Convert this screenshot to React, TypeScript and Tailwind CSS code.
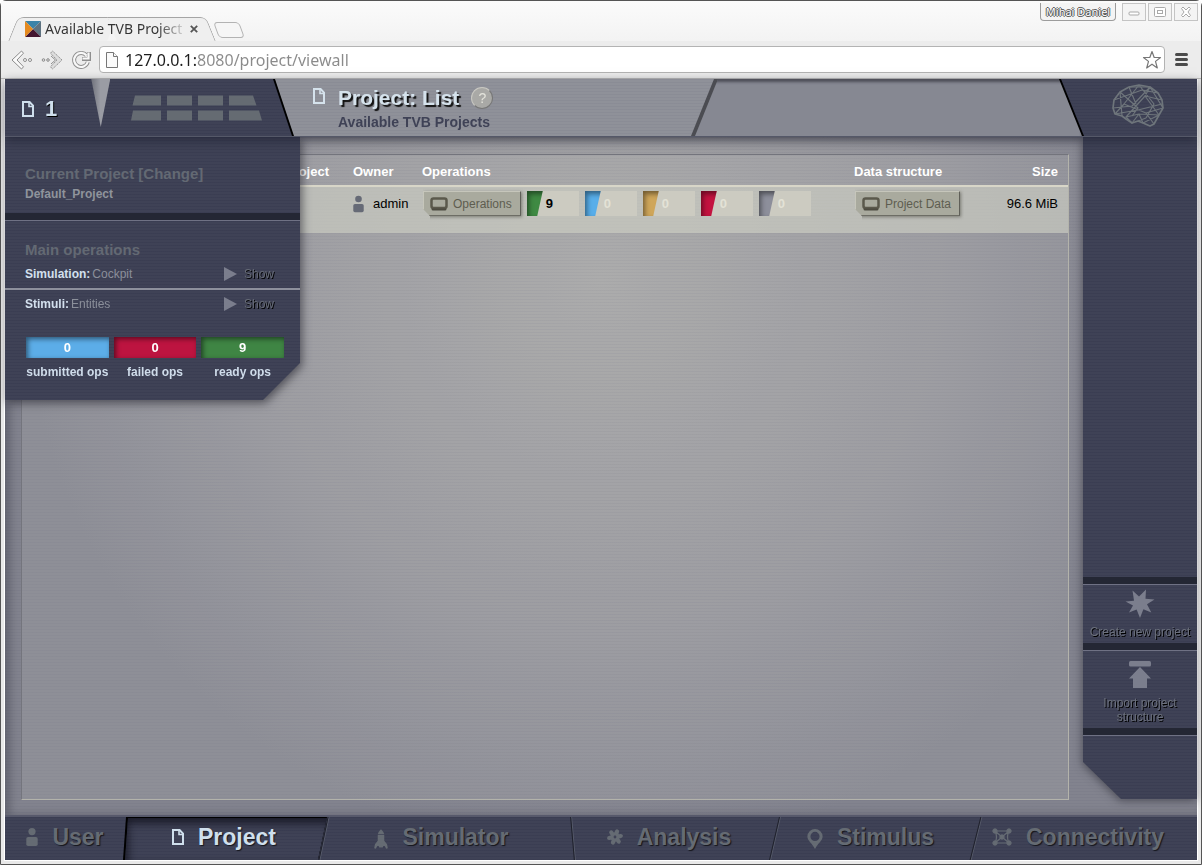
import type { ReactNode } from "react";

const NAVY =
  "bg-[#3f4256] bg-[image:repeating-linear-gradient(to_bottom,rgba(20,22,50,0.10)_0px,rgba(20,22,50,0.10)_1px,transparent_1px,transparent_3px)]";

type IconProps = { className?: string };

function PageIcon({ className }: IconProps) {
  return (
    <svg viewBox="0 0 12 16" className={className} fill="none" stroke="currentColor" strokeWidth="2">
      <path d="M1 1h6.600L11 4.600V15H1z" />
      <path d="M7 1v4.500h4" strokeWidth="1.600" />
    </svg>
  );
}

function PersonIcon({ className }: IconProps) {
  return (
    <svg viewBox="0 0 12 18" className={className} fill="currentColor">
      <circle cx="6" cy="3.600" r="3.600" />
      <rect x="0.300" y="9" width="11.400" height="9" rx="1.800" />
    </svg>
  );
}

function RocketIcon({ className }: IconProps) {
  return (
    <svg viewBox="0 0 15 21" className={className} fill="currentColor">
      <path d="M7.500 0C9.400 1.600 10.600 3.600 10.900 5.400H4.100C4.400 3.600 5.600 1.600 7.500 0z" />
      <path d="M4 6.200h7v6.300l3 3.500.8 4.500-1.800.5-1.500-3H10l-.6 1.600H5.600L5 18H3.500l-1.500 3-1.800-.5L1 16l3-3.500z" />
    </svg>
  );
}

function FlowerIcon({ className }: IconProps) {
  const angles = [20, 80, 140, 200, 260, 320];
  return (
    <svg viewBox="0 0 16 16" className={className} fill="currentColor">
      <path
        fillRule="evenodd"
        d="M8 3.200a4.800 4.800 0 1 0 0 9.600 4.800 4.800 0 0 0 0-9.600zm0 3.400a1.400 1.400 0 1 1 0 2.800 1.400 1.400 0 0 1 0-2.800z"
      />
      {angles.map((a) => (
        <ellipse key={a} cx="8" cy="2.600" rx="2.100" ry="2.600" transform={`rotate(${a} 8 8)`} />
      ))}
    </svg>
  );
}

function PinIcon({ className }: IconProps) {
  return (
    <svg viewBox="0 0 16 21" className={className} fill="currentColor">
      <path
        fillRule="evenodd"
        d="M8 0a8 8 0 0 1 8 8c0 4.500-5 7-8 13C5 15 0 12.500 0 8a8 8 0 0 1 8-8zm0 3a4.800 4.800 0 1 0 0 9.600A4.800 4.800 0 0 0 8 3z"
      />
    </svg>
  );
}

function NetworkIcon({ className }: IconProps) {
  return (
    <svg viewBox="0 0 20 18" className={className} fill="currentColor" stroke="currentColor">
      <path d="M3 3h14c-2 4-2 8 0 12H3c2-4 2-8 0-12zM3 3l14 12M17 3 3 15" fill="none" strokeWidth="1.200" />
      <circle cx="3" cy="3" r="2.200" />
      <circle cx="17" cy="3" r="2.200" />
      <circle cx="3" cy="15" r="2.200" />
      <circle cx="17" cy="15" r="2.200" />
      <circle cx="10" cy="9" r="2.200" />
    </svg>
  );
}

function MonitorIcon() {
  return (
    <svg viewBox="0 0 18 14" className="h-3.5 w-[18px]">
      <rect x="1.500" y="1.500" width="15" height="9.500" rx="2" fill="none" stroke="#5b594c" strokeWidth="2.500" />
      <path d="M1.500 11.500h15v.5a1.500 1.500 0 0 1-1.500 1.500H3A1.500 1.500 0 0 1 1.500 12z" fill="#4d4b40" />
    </svg>
  );
}

function BrainIcon() {
  return (
    <svg viewBox="0 0 52 43" className="h-[43px] w-[52px]" fill="none" stroke="#6e757b" strokeLinejoin="round">
      <path
        strokeWidth="1.700"
        d="M1 24 2 16 8 8 17 3 27 1 38 3 46 9 50 16 51 24 47 31 42 40 38 42 31 39 26 37 20 39 14 35 10 32 3 30z"
      />
      <path
        strokeWidth="1.200"
        d="M8 8 26 24 20 32M8 8 10 32M17 3 38 3 33 12 50 16M2 16 30 6 46 9M27 1 12 20 3 30M12 20 34 29 51 24M38 3 20 22 1 24M38 3 51 24M33 12 47 31M33 12 14 33 27 30 47 31M27 1 42 20 34 34M17 3 24 20M3 30 26 26 50 20M34 29 42 40M34 34 26 37M14 33 20 39 27 30 31 39 47 31"
      />
    </svg>
  );
}

function LayoutGlyph() {
  return (
    <svg viewBox="0 0 131 26" className="h-[26px] w-[131px]" fill="#656b72">
      <path d="M4 0.500h26v10H1.500zM36 .5h25v10H36zM67 .5h25v10H67zM98 .5h24l3.500 10H98z" />
      <path d="M2 15.500h28v10H0zM36 15.500h25v10H36zM67 15.500h25v10H67zM98 15.500h30l3 10H98z" />
    </svg>
  );
}

function WindowButton({ label, children }: { label: string; children: ReactNode }) {
  return (
    <button aria-label={label} className="flex h-[18px] w-6 items-center justify-center border border-[#c4c4c4] bg-[#f4f4f4]">
      <svg viewBox="0 0 14 12" className="h-3 w-3.5" fill="#fff" stroke="#a9a9a9" strokeWidth="1">
        {children}
      </svg>
    </button>
  );
}

function BrowserChrome() {
  return (
    <div className="bg-gradient-to-b from-[#fbfbfb] to-[#ebebeb] font-['Noto_Sans',sans-serif]">
      <div className="flex h-10 items-start justify-between pr-[3px]">
        <div className="flex h-full items-end pl-3">
          <div className="relative flex h-6 w-[197px] items-center gap-1 pr-3 pl-2">
            <span className="absolute inset-y-0 left-0 w-1/2 -skew-x-[22deg] rounded-tl-md border-t border-l border-[#a5a5a5] bg-[#efefef]" />
            <span className="absolute inset-y-0 right-0 w-1/2 skew-x-[22deg] rounded-tr-md border-t border-r border-[#a5a5a5] bg-[#efefef]" />
            <svg viewBox="0 0 16 16" className="relative ml-1 h-4 w-4 shrink-0">
              <path d="M0 0h16L8 8z" fill="#3a83a8" />
              <path d="M16 0v16L8 8z" fill="#5d7280" />
              <path d="M0 16h16L8 8z" fill="#43152f" />
              <path d="M0 0v16l8-8z" fill="#e58a1f" />
            </svg>
            <span className="relative min-w-0 flex-1 overflow-hidden bg-[linear-gradient(90deg,#333_82%,#33333333)] bg-clip-text text-sm leading-5 whitespace-nowrap text-transparent">
              Available TVB Projects
            </span>
            <button aria-label="Close tab" className="relative flex h-4 w-3 items-center justify-end">
              <svg viewBox="0 0 8 8" className="h-2 w-2" stroke="#555" strokeWidth="1.800">
                <path d="m.8.8 6.400 6.400M7.200.8.8 7.200" />
              </svg>
            </button>
          </div>
          <button
            aria-label="New tab"
            className="mb-[3px] ml-1.5 h-4 w-[26px] skew-x-[20deg] rounded border border-[#b3b3b3] bg-[#f6f6f6]"
          />
        </div>
        <div className="flex gap-0.5 pt-0.5">
          <button className="mr-1 h-[18px] w-[76px] rounded-b border border-t-0 border-[#9c9c9c] bg-[#f4f4f4] text-[11px] leading-4 text-white [text-shadow:1px_0_#555,-1px_0_#555,0_1px_#555,0_-1px_#555]">
            Mihai Daniel
          </button>
          <WindowButton label="Minimize">
            <rect x="2" y="6" width="10" height="3" rx="1" />
          </WindowButton>
          <WindowButton label="Maximize">
            <rect x="1.500" y="1.500" width="11" height="9" rx="1" />
            <rect x="4.500" y="4.500" width="5" height="3" />
          </WindowButton>
          <WindowButton label="Close">
            <path d="M2.500 2.500 4 1l3 3 3-3 1.500 1.500L9 6l2.500 3.500L10 11 7 8l-3 3-1.500-1.500L5 6z" />
          </WindowButton>
        </div>
      </div>
      <div className="flex h-[38px] items-center gap-2 border-b border-[#bbb] bg-[#ececec] pr-1.5 pl-2.5">
        <button aria-label="Back" className="w-[22px]">
          <svg viewBox="0 0 22 20" className="h-5 w-[22px]" fill="#fafafa" stroke="#8c8c8c">
            <path d="M10.500 1 1 10l9.500 9 2-2.200L6 10l6.500-6.800z" />
            <circle cx="14" cy="10" r="1.500" />
            <circle cx="19" cy="10" r="1.500" />
          </svg>
        </button>
        <button aria-label="Forward" className="w-[22px]">
          <svg viewBox="0 0 22 20" className="h-5 w-[22px]" fill="#ddd" stroke="#8c8c8c">
            <path d="M11.500 1 21 10l-9.500 9-2-2.200L16 10 9.500 3.200z" strokeDasharray="1.500 .8" />
            <path d="m10 6 4.500 4-4.500 4" fill="none" />
            <circle cx="2.500" cy="10" r="1.300" />
            <circle cx="7" cy="10" r="1.300" />
          </svg>
        </button>
        <button aria-label="Reload" className="w-5">
          <svg viewBox="0 0 20 20" className="h-5 w-5" fill="none">
            <path d="M15.500 5.500a7 7 0 1 0 1.300 6.500M18 2v7h-7" stroke="#8f8f8f" strokeWidth="4" />
            <path d="M15.500 5.500a7 7 0 1 0 1.300 6.500M17.500 2.500v6h-6" stroke="#f8f8f8" strokeWidth="2.200" />
          </svg>
        </button>
        <div className="flex h-[27px] flex-1 items-center rounded-sm border border-[#b3b3b3] bg-white pr-0.5 pl-1.5">
          <svg viewBox="0 0 12 16" className="h-4 w-3" fill="#fafafa" stroke="#777">
            <path d="M.5.5h7l4 4v11H.5z" />
            <path d="M7.500.5v4h4" />
          </svg>
          <input
            aria-label="Address"
            defaultValue="127.0.0.1:8080/project/viewall"
            className="ml-[7px] min-w-0 flex-1 bg-[linear-gradient(90deg,#1d1d1d_71px,#8a8a8a_71px)] bg-clip-text text-base leading-6 text-transparent outline-none"
          />
          <button aria-label="Bookmark">
            <svg viewBox="0 0 20 20" className="h-5 w-5" fill="#fff" stroke="#777" strokeWidth="1.200" strokeLinejoin="round">
              <path d="m10 1.500 2.200 6H18.500l-5 3.900 1.800 6.600L10 14.200 4.700 18l1.800-6.600-5-3.900h6.300z" />
            </svg>
          </button>
        </div>
        <button aria-label="Menu" className="mr-1.5 flex w-4 flex-col items-center gap-0.5">
          <span className="h-[3px] w-[13px] rounded-sm bg-[#4b4b4b]" />
          <span className="h-[3px] w-[13px] rounded-sm bg-[#4b4b4b]" />
          <span className="h-[3px] w-[13px] rounded-sm bg-[#4b4b4b]" />
        </button>
      </div>
    </div>
  );
}

function PageHeader() {
  return (
    <header className="relative z-10 flex h-[58px] border-b border-[#555868] bg-[#8f9199] bg-[image:repeating-linear-gradient(to_bottom,rgba(60,60,90,0.06)_0px,rgba(60,60,90,0.06)_1px,transparent_1px,transparent_3px)] shadow-[0_3px_10px_rgba(20,22,35,0.5)]">
      <div className="w-[289px] shrink-0 bg-black [clip-path:polygon(0_0,270px_0,289px_100%,0_100%)]">
        <div className={`flex h-full items-start [clip-path:polygon(0_0,268px_0,287px_100%,0_100%)] ${NAVY}`}>
          <div className="flex items-center gap-[11px] pt-4 pl-[17px] text-[#cfdfec]">
            <PageIcon className="h-4 w-3" />
            <span className="text-[22px] leading-7 font-bold [text-shadow:1px_1px_#000]">1</span>
          </div>
          <div className="ml-[34px] h-12 w-[19px] bg-[linear-gradient(90deg,#6f717b,#9a9ca4_50%)] [clip-path:polygon(0_0,100%_0,50%_100%)]" />
          <div className="pt-4 pl-[21px]">
            <LayoutGlyph />
          </div>
        </div>
      </div>
      <div className="flex w-[397px] shrink-0 items-start gap-[13px] pt-[5px] pl-[19px]">
        <PageIcon className="mt-1 h-4 w-3 text-[#d5e2ec]" />
        <div>
          <div className="flex items-center gap-3">
            <h1 className="text-[21px] leading-7 font-bold text-[#d5e2ec] [text-shadow:2px_2px_1px_#111]">Project: List</h1>
            <button
              aria-label="Help"
              className="h-[22px] w-[22px] rounded-full border border-[#c9c8c2] border-r-[#777] border-b-[#777] bg-[#a9a9a6] text-sm leading-5 text-[#e4e4dc]"
            >
              ?
            </button>
          </div>
          <p className="text-sm leading-5 font-bold text-[#3f4256]">Available TVB Projects</p>
        </div>
      </div>
      <div className="min-w-0 flex-1 bg-[#4b4c52] [clip-path:polygon(23px_0,100%_0,100%_100%,0_100%)]">
        <div className="h-full bg-[#868892] shadow-[inset_0_3px_3px_rgba(40,40,50,0.6)] [clip-path:polygon(27px_0,100%_0,100%_100%,4px_100%)]" />
      </div>
      <div className="-ml-[23px] w-[138px] shrink-0 bg-black [clip-path:polygon(0_0,100%_0,100%_100%,23px_100%)]">
        <div className={`flex h-full justify-end pt-[5px] pr-[33px] [clip-path:polygon(2px_0,100%_0,100%_100%,25px_100%)] ${NAVY}`}>
          <BrainIcon />
        </div>
      </div>
    </header>
  );
}

function Bar() {
  return <div className="h-2 border-b border-[#6f7184] bg-[#242734]" />;
}

function MenuRow({ label, value }: { label: string; value: string }) {
  return (
    <div className="flex h-7 items-center pr-[26px] pl-5 text-xs">
      <strong className="text-[#d3e0ee]">{label}</strong>
      <a href="#entity" className="ml-0.5 flex-1 text-[#8b8f9a]">
        {value}
      </a>
      <button className="flex items-center gap-[7px] text-[#666b76] [text-shadow:1px_1px_#000]">
        <svg viewBox="0 0 13 14" className="h-3.5 w-[13px]" fill="#7b7e8d">
          <path d="M0 0v14l13-7z" />
        </svg>
        Show
      </button>
    </div>
  );
}

const opsSummary = [
  { count: 0, label: "submitted ops", color: "bg-[#5cade8]" },
  { count: 0, label: "failed ops", color: "bg-[#bd1440]" },
  { count: 9, label: "ready ops", color: "bg-[#3f8544]" },
];

function ProjectMenu() {
  return (
    <div className="absolute top-0 left-0 w-[295px] drop-shadow-[2px_3px_5px_rgba(30,30,40,0.6)]">
      <nav
        aria-label="Current project"
        className={`pb-[19px] [clip-path:polygon(0_0,100%_0,100%_calc(100%-37px),calc(100%-37px)_100%,0_100%)] ${NAVY}`}
      >
        <div className="px-5 pt-[27px] pb-[9px]">
          <h2 className="text-[15px] leading-5 font-bold text-[#636973]">Current Project [Change]</h2>
          <p className="text-xs leading-5 font-bold text-[#8f949c]">Default_Project</p>
        </div>
        <Bar />
        <h2 className="px-5 pt-[19px] text-[15px] leading-5 font-bold text-[#636973]">Main operations</h2>
        <MenuRow label="Simulation:" value="Cockpit" />
        <div className="h-0.5 bg-[#8d909c]" />
        <MenuRow label="Stimuli:" value="Entities" />
        <div className="mt-[19px] grid grid-cols-3 gap-[5px] pr-4 pl-[21px] text-center">
          {opsSummary.map((item) => (
            <div key={item.label}>
              <div
                className={`h-[21px] text-[13px] leading-[21px] font-bold text-white shadow-[inset_2px_2px_5px_rgba(0,0,0,0.5)] ${item.color}`}
              >
                {item.count}
              </div>
              <div className="pt-[5px] text-xs leading-[18px] font-bold whitespace-nowrap text-[#cfdcea]">{item.label}</div>
            </div>
          ))}
        </div>
      </nav>
    </div>
  );
}

function ActionButton({ children }: { children: ReactNode }) {
  return (
    <button className="flex h-[25px] items-center gap-[5px] border border-t-[#c6c6bb] border-r-[#5f5f58] border-b-[#6d6d65] border-l-[#c6c6bb] bg-[#a9aa9e] pr-2 pl-1.5 text-xs whitespace-nowrap text-[#5e5d50] shadow-[1px_1px_3px_rgba(60,60,50,0.5)] [clip-path:polygon(0_-4px,104%_-4px,104%_120%,7px_120%,7px_100%,0_calc(100%-7px))]">
      <MonitorIcon />
      {children}
    </button>
  );
}

const stages = [
  { name: "finished", count: 9, color: "bg-[#3f8a43]", text: "text-black" },
  { name: "started", count: 0, color: "bg-[#58aeea]", text: "text-[#e3e2d6]" },
  { name: "pending", count: 0, color: "bg-[#cfa65a]", text: "text-[#e3e2d6]" },
  { name: "failed", count: 0, color: "bg-[#c3123f]", text: "text-[#e3e2d6]" },
  { name: "canceled", count: 0, color: "bg-[#8d8f9b]", text: "text-[#e3e2d6]" },
];

function ProjectTable() {
  return (
    <table className="w-full table-fixed border-collapse text-left text-[13px]">
      <colgroup>
        <col />
        <col className="w-[69px]" />
        <col className="w-[432px]" />
        <col className="w-[124px]" />
        <col className="w-[100px]" />
      </colgroup>
      <thead>
        <tr className="h-[31px] border-b-2 border-[#d8d6c8] text-white">
          <th className="pt-1 pr-3.5 text-right">Project</th>
          <th className="pt-1 pl-2.5">Owner</th>
          <th className="pt-1 pl-2.5">Operations</th>
          <th className="pt-1 pl-2.5">Data structure</th>
          <th className="pt-1 pr-2.5 text-right">Size</th>
        </tr>
      </thead>
      <tbody>
        <tr className="h-[47px] bg-[#cdcec3]/65 align-top text-black">
          <td />
          <td className="pt-1 pl-2.5">
            <div className="flex h-[25px] items-center gap-[9px]">
              <PersonIcon className="h-[18px] w-[11px] text-[#666a76]" />
              admin
            </div>
          </td>
          <td className="pt-1 pl-[11px]">
            <div className="flex items-center gap-1.5">
              <ActionButton>Operations</ActionButton>
              {stages.map((s) => (
                <div key={s.name} className="flex h-[25px] w-[52px] items-center gap-[3px] bg-[#cccbc1] text-[13px] font-bold">
                  <span
                    className={`h-full w-4 shadow-[inset_2px_3px_5px_rgba(0,0,0,0.45)] [clip-path:polygon(0_0,100%_0,66%_100%,0_100%)] ${s.color}`}
                  />
                  <span className={s.text}>{s.count}</span>
                </div>
              ))}
            </div>
          </td>
          <td className="pt-1 pl-[11px]">
            <ActionButton>Project Data</ActionButton>
          </td>
          <td className="pt-1 pr-2.5 text-right leading-[25px]">96.6 MiB</td>
        </tr>
      </tbody>
    </table>
  );
}

function SideActions() {
  return (
    <div className="w-[114px] shrink-0 drop-shadow-[-1px_2px_4px_rgba(30,30,40,0.5)]">
      <aside className={`flex h-full flex-col justify-end [clip-path:polygon(0_0,100%_0,100%_100%,38px_100%,0_calc(100%-37px))] ${NAVY}`}>
        <Bar />
        <button className="flex h-[58px] flex-col items-center pt-1 text-xs leading-3.5 whitespace-nowrap text-[#6b707c] [text-shadow:1px_1px_#000]">
          <svg viewBox="0 0 30 30" className="h-[30px] w-[30px]" fill="#7b7e8d">
            <path d="m15 29-3.400-8.500-7.600 3 4-7-7.500-4 8.500-.8L7.500 1.500l6.500 6 7-7-.5 9.300 9 .7-7.500 4.700 4.300 8.300-7.900-3.300z" />
          </svg>
          <span className="mt-1.5">Create new project</span>
        </button>
        <Bar />
        <button className="flex h-[77px] flex-col items-center px-3 pt-2.5 text-xs leading-3.5 text-[#6b707c] [text-shadow:1px_1px_#000]">
          <svg viewBox="0 0 22 28" className="h-7 w-[22px] shrink-0" fill="#7b7e8d">
            <rect width="22" height="5.500" rx="1.500" />
            <path d="m11 6 11 11.500h-4V27H4v-9.500H0z" />
          </svg>
          <span className="mt-[7px]">Import project structure</span>
        </button>
        <Bar />
        <div className="h-[63px] shrink-0" />
      </aside>
    </div>
  );
}

const tabs = [
  { label: "User", icon: <PersonIcon className="h-[18px] w-3" />, width: "flex-[120]", pad: "", edge: "" },
  { label: "Project", icon: <PageIcon className="h-4 w-3" />, width: "flex-[198]", pad: "", edge: "-skew-x-[4deg]" },
  { label: "Simulator", icon: <RocketIcon className="mt-1 h-5 w-3.5" />, width: "flex-[249]", pad: "pr-3", edge: "-skew-x-[12deg]" },
  { label: "Analysis", icon: <FlowerIcon className="h-4 w-4" />, width: "flex-[202]", pad: "pr-2", edge: "skew-x-[5deg]" },
  { label: "Stimulus", icon: <PinIcon className="mt-1 h-5 w-4" />, width: "flex-[201]", pad: "pr-2", edge: "-skew-x-[13deg]" },
  { label: "Connectivity", icon: <NetworkIcon className="h-[18px] w-5" />, width: "flex-[222]", pad: "pr-4", edge: "-skew-x-[14deg]" },
];

function BottomNav() {
  return (
    <nav aria-label="Sections" className={`flex h-[45px] border-t-2 border-[#57596b] ${NAVY}`}>
      {tabs.map((tab) => {
        const active = tab.label === "Project";
        return (
          <div key={tab.label} className={`relative flex min-w-0 basis-0 ${tab.width}`}>
            {active && (
              <span className="absolute inset-y-0 -right-1 -left-0.5 bg-black [clip-path:polygon(3px_0,100%_0,calc(100%-9px)_100%,0_100%)]">
                <span
                  className={`absolute inset-x-0 top-px bottom-0 left-0.5 shadow-[inset_3px_5px_8px_rgba(10,10,20,0.7)] [clip-path:polygon(3px_0,100%_0,calc(100%-9px)_100%,0_100%)] ${NAVY}`}
                />
              </span>
            )}
            {tab.edge && !active && (
              <span className={`absolute inset-y-0 left-0 w-0.5 border-r border-l border-r-[#565a6a] border-l-[#1f212b] ${tab.edge}`} />
            )}
            <a
              href={`#${tab.label.toLowerCase()}`}
              className={`relative flex flex-1 items-center justify-center gap-3.5 pb-1 text-[23px] leading-8 font-bold [text-shadow:1px_1px_1px_#15161d] ${tab.pad} ${
                active ? "text-[#cfdfec]" : "text-[#656b73]"
              }`}
            >
              {tab.icon}
              <span>{tab.label}</span>
            </a>
          </div>
        );
      })}
    </nav>
  );
}

export default function App() {
  return (
    <div className="flex min-h-screen flex-col rounded-t-md border border-[#555] bg-[#e9e9e9] font-['Liberation_Sans',Arial,sans-serif]">
      <BrowserChrome />
      <div className="mx-[3px] mb-[3px] flex flex-1 flex-col border border-t-0 border-white">
        <PageHeader />
        <main className="relative flex flex-1 bg-[#83848f] bg-[image:repeating-linear-gradient(to_bottom,rgba(60,60,90,0.06)_0px,rgba(60,60,90,0.06)_1px,transparent_1px,transparent_3px),radial-gradient(circle_at_50%_21%,#a5a5a6_0%,#94949b_42%,#82838e_72%)] pb-4 pl-4 shadow-[inset_5px_0_8px_rgba(50,50,65,0.4)]">
          <section
            aria-label="Projects"
            className="mt-[17px] mr-3.5 -mb-px min-w-0 flex-1 border border-t-[#74757d] border-r-[#b3b3ab] border-b-[#b3b3ab] border-l-[#74757d] bg-[#d8d8d0]/15"
          >
            <ProjectTable />
          </section>
          <SideActions />
          <ProjectMenu />
        </main>
        <BottomNav />
      </div>
    </div>
  );
}
